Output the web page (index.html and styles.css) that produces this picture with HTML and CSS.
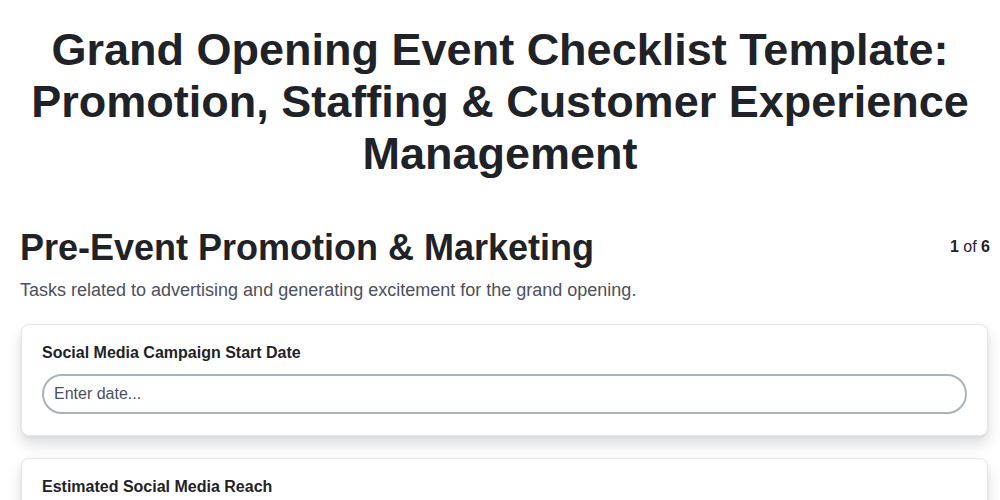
FILE: index.html
```html
<!DOCTYPE html>
<html lang="en">
<head>
<meta charset="utf-8">
<title>Grand Opening Event Checklist Template</title>
<link rel="stylesheet" href="styles.css">
</head>
<body>
<div class="page">
  <h1 class="title">Grand Opening Event Checklist Template: Promotion, Staffing &amp; Customer Experience Management</h1>
  <section class="section">
    <div class="section-head">
      <h2 class="section-title">Pre-Event Promotion &amp; Marketing</h2>
      <div class="pager"><b>1</b> of <b>6</b></div>
    </div>
    <p class="section-desc">Tasks related to advertising and generating excitement for the grand opening.</p>
    <div class="cards">
      <div class="card">
        <label class="label">Social Media Campaign Start Date</label>
        <input class="input" type="text" placeholder="Enter date...">
      </div>
      <div class="card">
        <label class="label">Estimated Social Media Reach</label>
        <input class="input" type="text" placeholder="Enter number...">
      </div>
    </div>
  </section>
</div>
</body>
</html>
```
FILE: styles.css
```css
* { box-sizing: border-box; }
html, body { margin: 0; padding: 0; background: #ffffff; }
body {
  font-family: "Liberation Sans", Arial, sans-serif;
  color: #1f2328;
}
.page {
  padding: 24px 10px 40px 20px;
}
.title {
  margin: 0 10px 0 0;
  font-size: 45px;
  line-height: 52px;
  font-weight: 700;
  text-align: center;
  color: #1f2328;
}
.section { margin-top: 46px; }
.section-head {
  display: flex;
  justify-content: space-between;
  align-items: flex-start;
}
.section-title {
  margin: 0;
  font-size: 36px;
  line-height: 44px;
  font-weight: 700;
  color: #1f2328;
}
.pager {
  font-size: 16px;
  line-height: 20px;
  margin-top: 11px;
  color: #1f2328;
}
.section-desc {
  margin: 9px 0 0 0;
  font-size: 18px;
  line-height: 22px;
  color: #4b5060;
}
.cards {
  margin-top: 23px;
  display: flex;
  flex-direction: column;
  gap: 22px;
  padding: 0 2px 0 1px;
}
.card {
  background: #fff;
  border: 1px solid #e6e7eb;
  border-radius: 8px;
  box-shadow: 0 8px 14px rgba(30, 35, 50, 0.16), 0 1px 3px rgba(30, 35, 50, 0.06);
  padding: 18px 20px 21px 20px;
  display: flex;
  flex-direction: column;
  gap: 11px;
}
.label {
  font-size: 16px;
  line-height: 20px;
  font-weight: 700;
  color: #1f2328;
}
.input {
  height: 40px;
  border: 2px solid #a9b3bc;
  border-radius: 20px;
  padding: 0 10px;
  font-family: "Liberation Sans", Arial, sans-serif;
  font-size: 16px;
  color: #1f2328;
  background: #fff;
  outline: none;
}
.input::placeholder { color: #4b5060; opacity: 1; }
```
